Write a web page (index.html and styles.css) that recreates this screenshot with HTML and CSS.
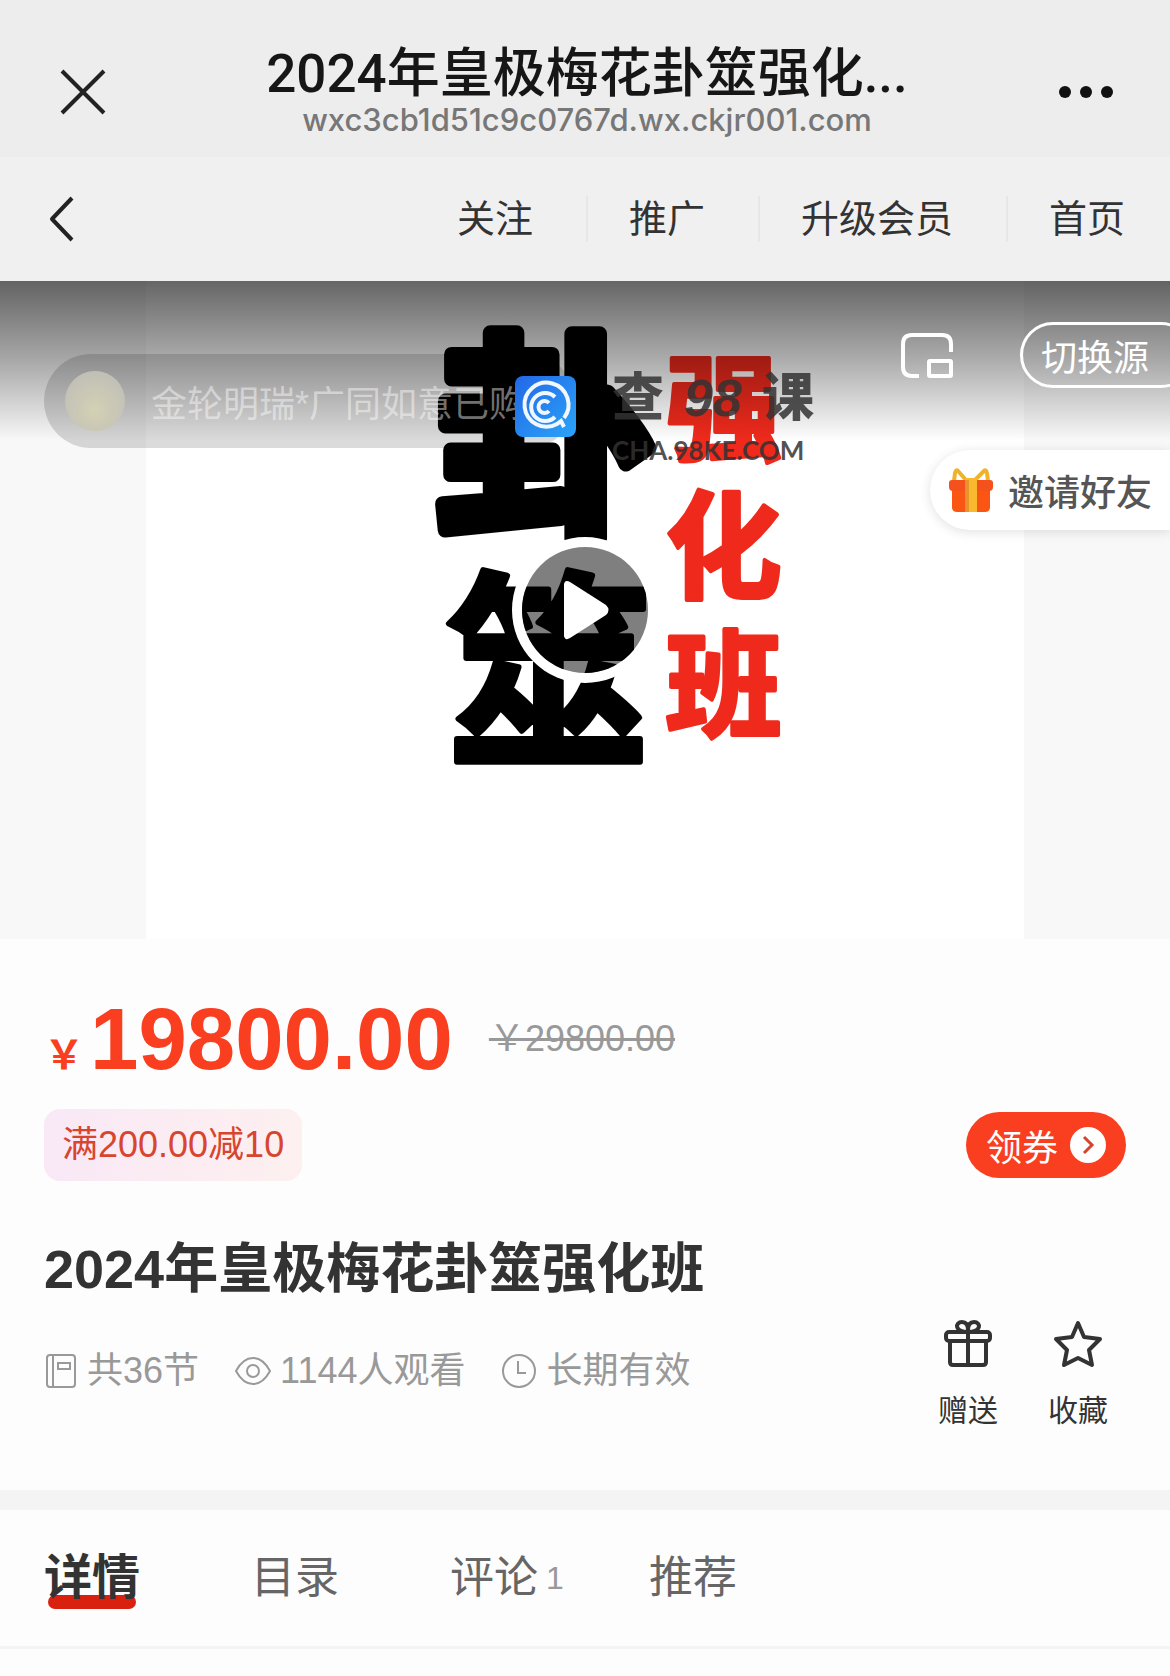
FILE: index.html
```html
<!DOCTYPE html>
<html lang="zh-CN">
<head>
    <title>2024年皇极梅花卦筮强化班</title>
    <meta charset="UTF-8">
    <meta name="viewport" content="width=device-width, initial-scale=1.0">
    <link rel="stylesheet" href="styles.css">
</head>
<body>
    <header class="titlebar">
        <button class="icon-btn close" aria-label="关闭">
            <svg width="46" height="46" viewBox="0 0 46 46"><path d="M2 2L44 44M44 2L2 44"/></svg>
        </button>
        <div class="titlebar-text">
            <div class="page-title">2024年皇极梅花卦筮强化...</div>
            <div class="page-url">wxc3cb1d51c9c0767d.wx.ckjr001.com</div>
        </div>
        <button class="icon-btn more" aria-label="更多">
            <svg width="56" height="14" viewBox="0 0 56 14"><circle cx="7" cy="7" r="6"/><circle cx="28" cy="7" r="6"/><circle cx="49" cy="7" r="6"/></svg>
        </button>
    </header>

    <nav class="topnav">
        <button class="icon-btn back" aria-label="返回">
            <svg width="28" height="48" viewBox="0 0 28 48"><path d="M24 3L4 24L24 45"/></svg>
        </button>
        <div class="topnav-right">
            <a href="#">关注</a>
            <a href="#">推广</a>
            <a href="#">升级会员</a>
            <a href="#">首页</a>
        </div>
    </nav>

    <!-- Video cover -->
    <section class="video">
        <svg class="poster" viewBox="0 0 878 658">
            <g class="poster-main">
                <text x="290" y="238" font-size="220" stroke-width="15">卦</text>
                <text x="299" y="468" font-size="208" stroke-width="6">筮</text>
            </g>
            <g class="poster-sub" font-size="116">
                <text x="520" y="170">强</text>
                <text x="520" y="308">化</text>
                <text x="520" y="447">班</text>
            </g>
        </svg>
        <div class="shade"></div>

        <div class="toast">
            <span class="avatar"></span>
            <span>金轮明瑞*广同如意已购买</span>
        </div>

        <div class="watermark">
            <svg width="61" height="61" viewBox="0 0 61 61">
                <defs>
                    <linearGradient id="blue" x1="0" y1="0" x2="1" y2="1">
                        <stop offset="0" stop-color="#2268e6"/>
                        <stop offset="1" stop-color="#2ba4f8"/>
                    </linearGradient>
                </defs>
                <rect width="61" height="61" rx="8" fill="url(#blue)"/>
                <g fill="none" stroke="#f2f7ff" stroke-width="4">
                    <path d="M49 42A22 22 0 1 0 42 48L46 45L49 51"/>
                    <path d="M40 21A14 14 0 1 0 40 41"/>
                    <path d="M34 27A6 6 0 1 0 34 35"/>
                </g>
            </svg>
            <div class="watermark-text">
                <div class="watermark-name">查 <i>98</i> 课</div>
                <div class="watermark-url">CHA.98KE.COM</div>
            </div>
        </div>

        <button class="icon-btn pip" aria-label="小窗播放">
            <svg width="54" height="48" viewBox="0 0 54 48">
                <path d="M51 20V12Q51 3 42 3H12Q3 3 3 12V35Q3 44 12 44H19"/>
                <rect x="29" y="29" width="22" height="15" rx="1"/>
            </svg>
        </button>
        <button class="source">切换源</button>

        <button class="play" aria-label="播放">
            <svg width="48" height="62" viewBox="0 0 48 62"><path d="M3 5Q4 0 9 3L45 26Q50 31 45 36L9 59Q4 62 3 57Z"/></svg>
        </button>

        <a class="invite" href="#">
            <svg width="46" height="46" viewBox="0 0 46 46">
                <path d="M18 13L10 4Q8 2 7 6L6 14M27 13L36 4Q38 2 39 6L40 14" fill="none" stroke="#eeb32b" stroke-width="4"/>
                <path d="M4 22H42V40Q42 45 37 45H9Q4 45 4 40Z" fill="#fb5514"/>
                <path d="M4 13H42Q45 13 45 16V20Q45 24 41 24H5Q1 24 1 20V16Q1 13 4 13Z" fill="#f4511c"/>
                <path d="M17 11H29V45H17Z" fill="#f9b92f"/>
                <path d="M17 13H21V45H17Z" fill="#e8932b"/>
            </svg>
            <span>邀请好友</span>
        </a>
    </section>

    <!-- Course info -->
    <main class="info">
        <div class="price-row">
            <span class="currency">￥</span>
            <span class="price">19800.00</span>
            <del>￥29800.00</del>
        </div>
        <div class="coupon-row">
            <span class="coupon">满200.00减10</span>
            <button class="get-coupon">领券
                <svg width="36" height="36" viewBox="0 0 36 36"><circle cx="18" cy="18" r="18" fill="#fff"/><path d="M14 10L22 18L14 26" fill="none" stroke="#d8432c" stroke-width="3"/></svg>
            </button>
        </div>
        <h1>2024年皇极梅花卦筮强化班</h1>
        <div class="detail-row">
            <ul class="meta">
                <li>
                    <svg width="34" height="36" viewBox="0 0 34 36"><rect x="3" y="2" width="28" height="32" rx="3"/><path d="M9 2V34M14 10H26V16H14Z"/></svg>
                    共36节
                </li>
                <li>
                    <svg width="36" height="36" viewBox="0 0 36 36"><path d="M1 18Q8 5 18 5T35 18Q28 31 18 31T1 18Z"/><circle cx="18" cy="18" r="6"/></svg>
                    1144人观看
                </li>
                <li>
                    <svg width="36" height="36" viewBox="0 0 36 36"><circle cx="18" cy="18" r="16"/><path d="M17 8V20H25"/></svg>
                    长期有效
                </li>
            </ul>
            <div class="actions">
                <button>
                    <svg width="50" height="50" viewBox="0 0 50 50">
                        <rect x="3" y="13" width="44" height="9" rx="3"/>
                        <path d="M7 22V43Q7 46 10 46H40Q43 46 43 43V22M25 13V46M25 13C11 13 12 3 19 3Q25 3 25 11Q25 3 31 3C38 3 39 13 25 13"/>
                    </svg>
                    赠送
                </button>
                <button>
                    <svg width="50" height="50" viewBox="0 0 50 50"><path d="M25 4L31 18L47 20L36 31L39 46L25 39L11 46L14 31L3 20L19 18Z"/></svg>
                    收藏
                </button>
            </div>
        </div>
    </main>

    <nav class="tabs">
        <a class="active" href="#">详情</a>
        <a href="#">目录</a>
        <a href="#">评论<span class="count">1</span></a>
        <a href="#">推荐</a>
    </nav>
</body>
</html>
```

FILE: styles.css
```css
* {
    box-sizing: border-box;
}

body {
    margin: 0;
    font-family: "Liberation Sans", "Noto Sans CJK SC", sans-serif;
    font-size: 36px;
    color: #333;
    background-color: #fdfdfd;
}

a {
    color: inherit;
    text-decoration: none;
}

button {
    padding: 0;
    border: none;
    background: none;
    font: inherit;
    color: inherit;
}

svg {
    display: block;
    flex: none;
}

.icon-btn svg {
    fill: none;
    stroke: #222;
    stroke-width: 4;
    stroke-linejoin: round;
}

/* Browser title bar */
.titlebar {
    display: grid;
    grid-template-columns: 1fr auto 1fr;
    align-items: center;
    height: 157px;
    padding: 26px 56px 0 60px;
    background-color: #ededed;
}

.close {
    justify-self: start;
}

.more {
    justify-self: end;
}

.more svg {
    fill: #111;
    stroke: none;
}

.titlebar-text {
    text-align: center;
    white-space: nowrap;
}

.page-title {
    font-family: Roboto, "Noto Sans CJK SC", sans-serif;
    font-size: 53px;
    font-weight: 500;
    line-height: 56px;
    color: #161616;
}

.page-url {
    font-family: Inter, sans-serif;
    font-size: 31px;
    font-weight: 500;
    line-height: 36px;
    color: #777;
}

/* Site nav */
.topnav {
    display: flex;
    justify-content: space-between;
    align-items: center;
    height: 124px;
    padding: 0 45px 0 48px;
    background-color: #f0f0f0;
}

.topnav-right {
    display: flex;
    font-size: 38px;
    line-height: 46px;
}

.topnav-right a {
    padding: 0 53px 0 41px;
    border-right: 2px solid #e7e7e7;
}

.topnav-right a:last-child {
    padding-right: 0;
    border-right: none;
}

/* Video cover */
.video {
    position: relative;
    display: flex;
    justify-content: center;
    aspect-ratio: 16 / 9;
    background-color: #f8f8f8;
    overflow: hidden;
}

.poster {
    width: 75%;
    background-color: #fff;
    font-weight: 700;
    stroke-linejoin: round;
}

.poster-main {
    fill: #000;
    stroke: #000;
}

.poster-sub {
    fill: #ef2a1c;
    stroke: #ef2a1c;
    stroke-width: 4;
}

.shade {
    position: absolute;
    top: 0;
    left: 0;
    right: 0;
    height: 160px;
    background: linear-gradient(rgba(0, 0, 0, 0.6), rgba(0, 0, 0, 0.32) 50%, rgba(0, 0, 0, 0));
}

.toast {
    position: absolute;
    top: 73px;
    left: 44px;
    display: flex;
    align-items: center;
    gap: 26px;
    width: 531px;
    height: 94px;
    padding-left: 21px;
    border-radius: 47px;
    background-color: rgba(0, 0, 0, 0.14);
    color: rgba(255, 255, 255, 0.45);
    white-space: nowrap;
    overflow: hidden;
}

.avatar {
    flex: none;
    width: 60px;
    height: 60px;
    border-radius: 50%;
    background: radial-gradient(circle at 50% 65%, #d3d1b4, #c5c3b6 60%, #bdbbb5);
}

.watermark {
    position: absolute;
    top: 95px;
    left: 515px;
    display: flex;
    gap: 36px;
    color: rgba(50, 50, 50, 0.85);
    white-space: nowrap;
}

.watermark-text {
    width: 202px;
}

.watermark-name {
    display: flex;
    justify-content: space-between;
    font-size: 52px;
    font-weight: 900;
    line-height: 44px;
}

.watermark-url {
    font-family: Lato, sans-serif;
    font-size: 26px;
    font-weight: 700;
    line-height: 60px;
}

.pip {
    position: absolute;
    top: 51px;
    right: 216px;
}

.pip svg {
    stroke: #fff;
}

.source {
    position: absolute;
    top: 41px;
    right: -24px;
    height: 66px;
    padding: 0 42px 0 18px;
    border: 3px solid #fff;
    border-radius: 33px;
    color: #fff;
}

.play {
    position: absolute;
    top: 50%;
    left: 50%;
    display: grid;
    place-items: center;
    width: 126px;
    height: 126px;
    margin: -63px;
    border-radius: 50%;
    background-color: rgba(0, 0, 0, 0.5);
    box-shadow: 0 0 0 10px #fff;
}

.play svg {
    fill: #fff;
}

.invite {
    position: absolute;
    top: 169px;
    right: 0;
    display: flex;
    align-items: center;
    gap: 14px;
    height: 80px;
    padding: 0 18px;
    border-radius: 40px 0 0 40px;
    background-color: #fff;
    box-shadow: 0 2px 12px rgba(0, 0, 0, 0.12);
    font-weight: 500;
    color: #555;
}

/* Course info */
.info {
    padding: 52px 44px 59px;
}

.price-row {
    display: flex;
    align-items: baseline;
    line-height: 96px;
    color: #fa3e20;
}

.currency {
    font-size: 40px;
    font-weight: 700;
}

.price {
    padding-left: 6px;
    font-size: 87px;
    font-weight: 700;
}

.price-row del {
    align-self: flex-start;
    padding-left: 36px;
    color: #999;
}

.coupon-row {
    display: flex;
    justify-content: space-between;
    align-items: center;
    margin-top: 6px;
}

.coupon {
    padding: 0 18px;
    border-radius: 16px;
    background: linear-gradient(90deg, #f9e8f6, #fdf0ef);
    line-height: 72px;
    color: #d8452f;
}

.get-coupon {
    display: flex;
    align-items: center;
    gap: 12px;
    height: 66px;
    padding: 0 20px;
    border-radius: 33px;
    background-color: #fa3e20;
    color: #fff;
}

h1 {
    margin: 48px 0 0;
    font-size: 54px;
    line-height: 80px;
}

.detail-row {
    display: flex;
    justify-content: space-between;
    align-items: flex-start;
    margin-top: 10px;
}

.meta {
    display: flex;
    gap: 36px;
    margin: 0;
    padding: 26px 0 0;
    list-style: none;
    line-height: 52px;
    color: #999;
}

.meta li {
    display: flex;
    align-items: center;
    gap: 9px;
}

.meta svg {
    fill: none;
    stroke: #999;
    stroke-width: 2;
}

.actions {
    display: flex;
    gap: 50px;
    padding-right: 18px;
}

.actions button {
    display: flex;
    flex-direction: column;
    align-items: center;
    gap: 22px;
    font-size: 30px;
    line-height: 40px;
}

.actions svg {
    fill: none;
    stroke: #333;
    stroke-width: 4;
    stroke-linejoin: round;
}

/* Tabs */
.tabs {
    display: flex;
    align-items: center;
    gap: 111px;
    height: 159px;
    padding: 0 44px;
    border-top: 20px solid #f4f4f4;
    border-bottom: 3px solid #f4f4f4;
    font-size: 44px;
    line-height: 60px;
    color: #666;
}

.tabs a {
    position: relative;
}

.tabs .active {
    font-size: 48px;
    font-weight: 700;
    color: #333;
}

.tabs .active::after {
    content: "";
    position: absolute;
    left: 4px;
    right: 4px;
    bottom: -1px;
    z-index: -1;
    height: 14px;
    border-radius: 7px;
    background-color: #d8220f;
}

.count {
    position: absolute;
    left: 100%;
    padding-left: 8px;
    font-size: 32px;
    color: #999;
}
```
